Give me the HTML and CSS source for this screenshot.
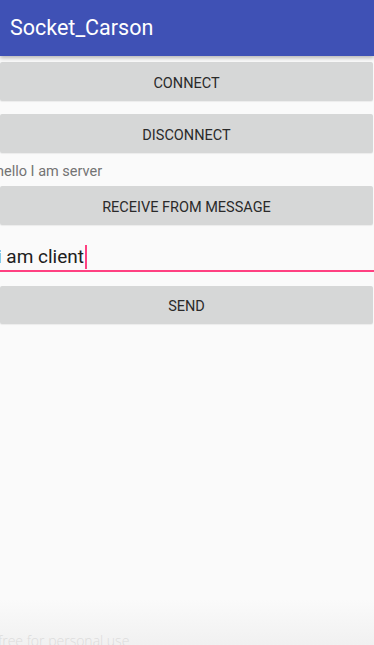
FILE: index.html
```html
<!DOCTYPE html>
<html>
<head>
<meta charset="utf-8">
<link rel="stylesheet" href="styles.css">
</head>
<body>
<div class="screen">
  <header class="appbar">Socket_Carson</header>
  <main class="content">
    <button class="btn btn-connect">CONNECT</button>
    <button class="btn btn-disconnect">DISCONNECT</button>
    <div class="received">hello I am server</div>
    <button class="btn">RECEIVE FROM MESSAGE</button>
    <div class="edit"><span class="edit-text">i am client</span><span class="caret"></span></div>
    <button class="btn btn-send">SEND</button>
  </main>
  <footer class="footer"><span class="watermark">free for personal use</span></footer>
</div>
</body>
</html>
```

FILE: styles.css
```css
html, body {
  margin: 0;
  padding: 0;
  background: #fafafa;
}
.screen {
  width: 374px;
  height: 645px;
  display: flex;
  flex-direction: column;
  overflow: hidden;
  font-family: Roboto, "Noto Sans", sans-serif;
  background: #fafafa;
}
.appbar {
  height: 56px;
  flex: none;
  background: #3f51b5;
  color: #ffffff;
  font-size: 21.5px;
  font-weight: 400;
  display: flex;
  align-items: center;
  padding-left: 10px;
  padding-bottom: 2px;
  box-sizing: border-box;
  box-shadow: 0 2px 4px rgba(0,0,0,0.28);
  position: relative;
  z-index: 1;
}
.content {
  display: flex;
  flex-direction: column;
  padding-top: 6px;
  flex: 1;
}
.btn {
  display: block;
  width: 373px;
  height: 39px;
  border: 0;
  border-radius: 2px;
  background: #d6d7d7;
  color: #2a2a2a;
  font-family: Roboto, "Noto Sans", sans-serif;
  font-size: 14.5px;
  padding: 3px 0 0 0;
  margin: 0;
  box-shadow: 0 1px 1px rgba(0,0,0,0.06);
}
.btn-disconnect {
  margin-top: 13px;
}
.received {
  height: 33px;
  display: flex;
  align-items: center;
  margin-left: -4px;
  color: #737373;
  font-size: 14.5px;
  padding-top: 3px;
  box-sizing: border-box;
}
.edit {
  height: 47px;
  display: flex;
  align-items: center;
  border-bottom: 2px solid #ff4081;
  box-sizing: border-box;
  padding-top: 20px;
  padding-bottom: 2px;
}
.edit-text {
  font-size: 19px;
  color: #202020;
  margin-left: -3px;
}
.caret {
  width: 2px;
  height: 24px;
  background: #ff4081;
  margin-left: 1px;
}
.btn-send {
  margin-top: 14px;
  height: 38px;
}
.footer {
  height: 45px;
  flex: none;
  background: linear-gradient(#fafafa, #f1f1f1);
  position: relative;
}
.watermark {
  position: absolute;
  left: -2px;
  bottom: -5px;
  font-family: "Open Sans", sans-serif;
  font-weight: 300;
  font-size: 14px;
  color: #dcdcdc;
}
```
